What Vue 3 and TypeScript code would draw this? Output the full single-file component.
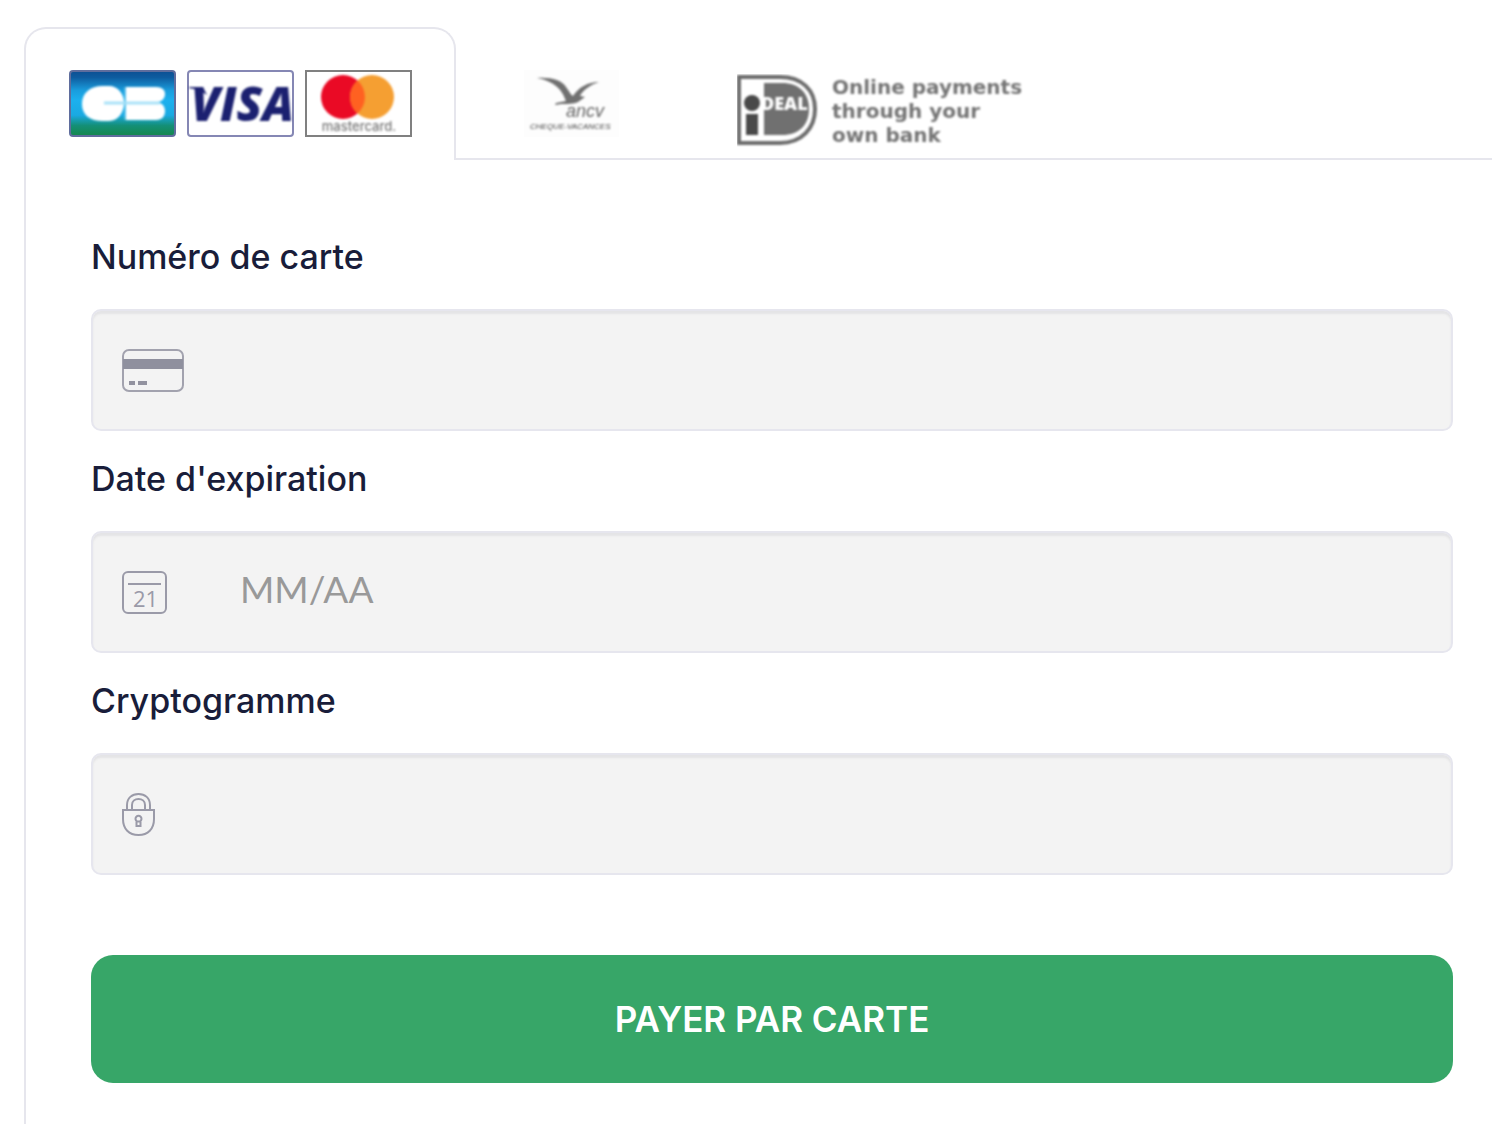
<script setup lang="ts">
import { reactive, ref } from 'vue'

type Method = 'card' | 'ancv' | 'ideal'
type FieldName = 'number' | 'expiry' | 'code'

interface Field {
  name: FieldName
  label: string
  placeholder: string
  autocomplete: string
}

const method = ref<Method>('card')
const values = reactive<Record<FieldName, string>>({ number: '', expiry: '', code: '' })

const fields: Field[] = [
  { name: 'number', label: 'Numéro de carte', placeholder: '', autocomplete: 'cc-number' },
  { name: 'expiry', label: "Date d'expiration", placeholder: 'MM/AA', autocomplete: 'cc-exp' },
  { name: 'code', label: 'Cryptogramme', placeholder: '', autocomplete: 'cc-csc' },
]
</script>

<template>
  <main class="payment">
    <nav class="tabs">
      <button class="tab tab-card" type="button" :aria-pressed="method === 'card'" @click="method = 'card'">
        <svg class="logo" width="107" height="67" viewBox="0 0 107 67">
          <defs>
            <linearGradient id="cb-fill" x1="0" y1="0" x2="0" y2="1">
              <stop offset="0" stop-color="#0c4f93" />
              <stop offset="0.1" stop-color="#0e5c9f" />
              <stop offset="0.3" stop-color="#1a9ddd" />
              <stop offset="0.45" stop-color="#1cb0ee" />
              <stop offset="0.68" stop-color="#1aa9e2" />
              <stop offset="0.84" stop-color="#148f76" />
              <stop offset="1" stop-color="#15874b" />
            </linearGradient>
          </defs>
          <rect x="1" y="1" width="105" height="65" rx="3" fill="url(#cb-fill)" stroke="#5f6d9d" stroke-width="2" />
          <g class="soft">
            <path d="M34 16h6c9 0 15 8 15 17s-6 18-15 18h-6c-13 0-21-6-21-17s8-18 21-18z" fill="#fff" />
            <path d="M57 17h30c6 0 9 3 9 7s-3 8-8 8c5 1 8 4 8 9s-3 9-9 9H57z" fill="#fff" />
            <path d="M35 33h56" stroke="#a9e2f8" stroke-width="3" />
            <path d="M56 17v33" stroke="#8dd6f3" stroke-width="1" />
          </g>
        </svg>
        <svg class="logo" width="107" height="67" viewBox="0 0 107 67">
          <rect x="1" y="1" width="105" height="65" rx="3" fill="#fff" stroke="#8587b4" stroke-width="2" />
          <g class="soft">
            <text class="visa" x="4" y="51">VISA</text>
            <path d="M2 17h14l4 8C13 20 8 19 2 18z" fill="#1b2070" />
          </g>
        </svg>
        <svg class="logo" width="107" height="67" viewBox="0 0 107 67">
          <rect x="1" y="1" width="105" height="65" fill="#fff" stroke="#808080" stroke-width="2" />
          <g class="soft">
            <circle cx="38" cy="27" r="22" fill="#ea0a25" />
            <circle cx="67" cy="27" r="22" fill="#f59f32" />
            <path d="M52.500 10.500a22 22 0 0 1 0 33a22 22 0 0 1 0-33z" fill="#ff6121" />
            <text class="mastercard" x="54" y="61" text-anchor="middle">mastercard.</text>
          </g>
        </svg>
      </button>
      <button class="tab tab-ancv" type="button" :aria-pressed="method === 'ancv'" @click="method = 'ancv'">
        <svg class="logo" width="95" height="67" viewBox="0 0 95 67">
          <rect width="95" height="67" fill="#fdfdfd" />
          <g class="soft">
            <path d="M13 8c13-1 25 2 29 9c3 4 5 8 7 9c6-9 15-14 26-14c-9 3-16 8-19 14l5 1l-7 5c-7 3-14 1-23 3l1-2l10-2c-3-8-8-19-29-23z" fill="#707070" />
            <text class="ancv" x="42" y="47">ancv</text>
            <text class="ancv-caption" x="6" y="59">CHEQUE-VACANCES</text>
          </g>
        </svg>
      </button>
      <button class="tab tab-ideal" type="button" :aria-pressed="method === 'ideal'" @click="method = 'ideal'">
        <svg class="logo" width="300" height="74" viewBox="0 0 300 74">
          <g class="soft">
            <path d="M2 3h41c22 0 35 13 35 32S65 69 43 69H2z" fill="#fff" stroke="#6c6c6c" stroke-width="4" />
            <path d="M27 9h18c17 0 27 10 27 26S62 61 45 61H27z" fill="#707070" />
            <circle cx="15" cy="29" r="8" fill="#494949" />
            <path d="M9 40h12v21H9z" fill="#494949" />
            <text class="ideal" x="24" y="36">DEAL</text>
            <g class="ideal-caption">
              <text x="95" y="20">Online payments</text>
              <text x="95" y="44">through your</text>
              <text x="95" y="68">own bank</text>
            </g>
          </g>
        </svg>
      </button>
      <div class="tabs-rest"></div>
    </nav>

    <form class="panel" @submit.prevent>
      <div v-for="field in fields" :key="field.name" class="field">
        <label class="label" :for="field.name">{{ field.label }}</label>
        <div class="control">
          <span class="icon">
            <svg v-if="field.name === 'number'" width="62" height="43" viewBox="0 0 62 43">
              <rect x="1" y="1" width="60" height="41" rx="6" fill="none" stroke="#a2a2ae" stroke-width="2" />
              <path d="M1 10h60v10H1z" fill="#8f909e" />
              <path d="M7 34h6M16 34h9" stroke="#92929f" stroke-width="4" />
            </svg>
            <svg v-else-if="field.name === 'expiry'" width="45" height="43" viewBox="0 0 45 43">
              <rect x="1" y="1" width="43" height="41" rx="5" fill="none" stroke="#9a9aa8" stroke-width="2" />
              <path d="M6 13h33" stroke="#9a9aa8" stroke-width="2" />
              <text class="day" x="11" y="36">21</text>
            </svg>
            <svg v-else width="33" height="43" viewBox="0 0 33 43" fill="none" stroke="#9a9aa8" stroke-width="2">
              <path d="M1 17h31v9c0 10-6 16-15.500 16S1 36 1 26z" />
              <path d="M5 17v-5C5 5 10 1 16.500 1S28 5 28 12v5" />
              <path d="M10 17v-5c0-4 3-6 6.500-6s6.500 2 6.500 6v5" />
              <path d="M14.500 28a3 3 0 1 1 4 0v5h-4zM14.500 28.500h4" stroke-width="2" />
            </svg>
          </span>
          <input
            :id="field.name"
            v-model="values[field.name]"
            class="input"
            type="text"
            inputmode="numeric"
            :placeholder="field.placeholder"
            :autocomplete="field.autocomplete"
          />
        </div>
      </div>
      <button class="pay" type="submit">PAYER PAR CARTE</button>
    </form>
  </main>
</template>

<style>
body {
  background: #fff;
}
</style>

<style scoped>
.payment {
  box-sizing: border-box;
  min-height: 100vh;
  padding: 27px 0 0 24px;
  display: flex;
  flex-direction: column;
  font-family: Inter, "Liberation Sans", sans-serif;
  color: #191d3a;
}

.tabs {
  display: flex;
}

.tab {
  box-sizing: border-box;
  height: 133px;
  margin: 0;
  border: 0 solid #e6e6ed;
  border-bottom-width: 2px;
  background: none;
  display: flex;
  align-items: flex-start;
  flex: none;
  cursor: pointer;
}

.tab-card {
  padding: 41px 42px 0 43px;
  gap: 11px;
  border-width: 2px 2px 0 2px;
  border-radius: 22px 22px 0 0;
}

.tab-ancv {
  padding: 43px 68px 0;
}

.tab-ideal {
  padding: 47px 50px 0;
}

.tabs-rest {
  flex: 1;
  border-bottom: 2px solid #e6e6ed;
}

.logo {
  display: block;
  flex: none;
}

.soft {
  filter: blur(1px);
}

.visa {
  font: italic 800 47px "Open Sans", sans-serif;
  fill: #1b2070;
}

.mastercard {
  font: 500 13px Inter, sans-serif;
  fill: #777;
}

.ancv {
  font: italic 400 18px "Liberation Sans", sans-serif;
  fill: #666;
}

.ancv-caption {
  font: italic 400 8px "Liberation Sans", sans-serif;
  fill: #444;
}

.ideal {
  font: 800 18px "Open Sans", sans-serif;
  fill: #fff;
}

.ideal-caption {
  font: 700 20px "DejaVu Sans", sans-serif;
  fill: #757575;
}

.panel {
  flex: 1;
  padding: 49px 39px 41px 65px;
  border-left: 2px solid #e6e6ed;
}

.label {
  display: block;
  padding: 24px 0 28px;
  font-size: 34px;
  line-height: 48px;
  font-weight: 500;
}

.control {
  box-sizing: border-box;
  height: 122px;
  padding-left: 29px;
  display: flex;
  align-items: center;
  border: 2px solid #e6e6ee;
  border-radius: 10px;
  background: #f3f3f3;
  box-shadow: inset 0 3px 2px #e4e4e6;
}

.icon {
  width: 118px;
  flex: none;
  display: flex;
}

.day {
  font: 400 22px "Open Sans", sans-serif;
  fill: #9a9aa8;
}

.input {
  box-sizing: border-box;
  flex: 1;
  min-width: 0;
  height: 100%;
  padding: 0 0 8px;
  border: 0;
  outline: 0;
  background: none;
  color: #191d3a;
  font: 400 37px Lato, sans-serif;
}

.input::placeholder {
  color: #999;
  opacity: 1;
}

.pay {
  display: block;
  width: 100%;
  height: 128px;
  margin: 80px 0 0;
  padding: 0;
  border: 0;
  border-radius: 22px;
  background: #37a668;
  color: #fff;
  font: 600 35px Inter, "Liberation Sans", sans-serif;
  cursor: pointer;
}
</style>
